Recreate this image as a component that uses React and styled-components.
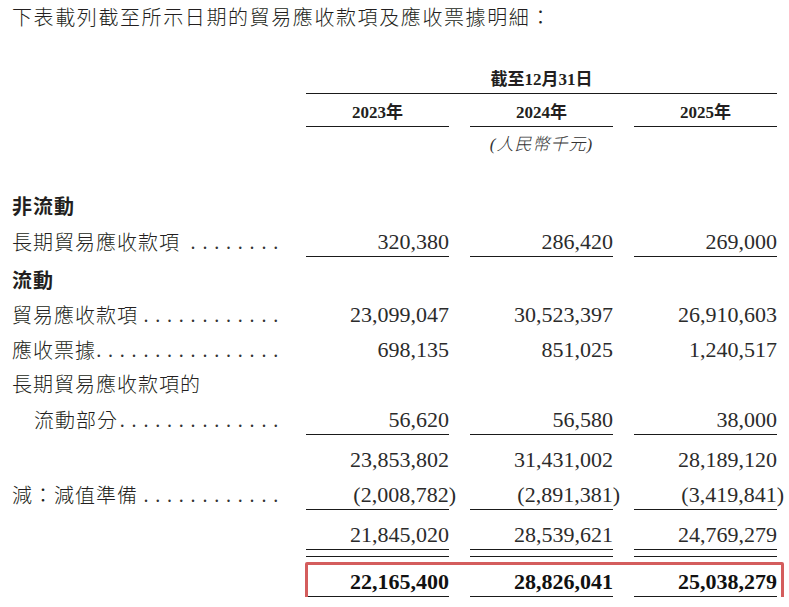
import React from "react";
import styled, { createGlobalStyle, css } from "styled-components";

const CJK = `"Noto Sans CJK TC", "Noto Sans CJK SC", sans-serif`;
const NUM = `"Liberation Serif", "Noto Sans CJK TC", serif`;

const rows = [
  { type: "heading", label: "非流動", mt: 34 },
  { label: "長期貿易應收款項", dots: 8, values: ["320,380", "286,420", "269,000"], rule: "single", mt: 8 },
  { type: "heading", label: "流動", mt: 9 },
  { label: "貿易應收款項", dots: 12, values: ["23,099,047", "30,523,397", "26,910,603"], mt: 7 },
  { label: "應收票據", dots: 16, values: ["698,135", "851,025", "1,240,517"], mt: 7 },
  { label: "長期貿易應收款項的", mt: 6 },
  { label: "流動部分", indent: 22, dots: 14, values: ["56,620", "56,580", "38,000"], rule: "single", mt: 8 },
  { label: "", values: ["23,853,802", "31,431,002", "28,189,120"], mt: 11 },
  { label: "減：減值準備", dots: 12, values: ["(2,008,782)", "(2,891,381)", "(3,419,841)"], rule: "single", mt: 7 },
  { label: "", values: ["21,845,020", "28,539,621", "24,769,279"], rule: "double", mt: 11 },
  { label: "", values: ["22,165,400", "28,826,041", "25,038,279"], rule: "double", bold: true, highlight: true, mt: 18 },
];

const renderAmount = (value) => {
  if (value.endsWith(")")) {
    return (
      <>
        {value.slice(0, -1)}
        <Paren>)</Paren>
      </>
    );
  }
  return value;
};

const App = () => {
  return (
    <>
      <GlobalStyle />
      <Page>
        <Intro>下表載列截至所示日期的貿易應收款項及應收票據明細：</Intro>

        <Row $lh={26} $mt={35}>
          <span />
          <PeriodTitle>截至12月31日</PeriodTitle>
        </Row>
        <Row $lh={26} $mt={6}>
          <span />
          <YearCell>2023年</YearCell>
          <YearCell>2024年</YearCell>
          <YearCell>2025年</YearCell>
        </Row>
        <Row $lh={26} $mt={5}>
          <span />
          <span />
          <Unit>(人民幣千元)</Unit>
        </Row>

        {rows.map((row, i) =>
          row.type === "heading" ? (
            <Row key={i} $mt={row.mt}>
              <SectionLabel>{row.label}</SectionLabel>
            </Row>
          ) : (
            <Row key={i} $mt={row.mt} $highlight={row.highlight}>
              <Label $indent={row.indent}>
                <span>{row.label}</span>
                {row.dots ? <Leader>{".".repeat(row.dots)}</Leader> : null}
              </Label>
              {(row.values || ["", "", ""]).map((v, j) =>
                row.values ? (
                  <Amount key={j} $rule={row.rule} $bold={row.bold}>
                    {renderAmount(v)}
                  </Amount>
                ) : (
                  <span key={j} />
                )
              )}
            </Row>
          )
        )}
      </Page>
    </>
  );
};
export default App;

const GlobalStyle = createGlobalStyle`
  body {
    margin: 0;
    background: #ffffff;
  }
`;

const Page = styled.div`
  width: 789px;
  box-sizing: border-box;
  padding: 2px 12px 0;
  color: #231f20;
`;

const Intro = styled.p`
  margin: 0;
  font-family: ${CJK};
  font-size: 20px;
  font-weight: 300;
  letter-spacing: 1.6px;
  line-height: 30px;
  white-space: nowrap;
`;

const Row = styled.div`
  position: relative;
  display: grid;
  grid-template-columns: 273px 143px 143px 143px;
  column-gap: 21px;
  margin-top: ${(p) => p.$mt || 0}px;
  line-height: ${(p) => p.$lh || 28}px;

  ${(p) =>
    p.$highlight &&
    css`
      &::after {
        content: "";
        position: absolute;
        left: 293px;
        right: -7px;
        top: -6px;
        bottom: -6px;
        border: 3px solid #d45d5d;
        border-radius: 2px;
        pointer-events: none;
      }
    `}
`;

const PeriodTitle = styled.div`
  grid-column: 2 / 5;
  text-align: center;
  font-family: ${NUM};
  font-size: 17px;
  font-weight: 700;
  border-bottom: 1px solid #1a1a1a;
`;

const YearCell = styled.div`
  text-align: center;
  font-family: ${NUM};
  font-size: 17px;
  font-weight: 700;
  border-bottom: 1px solid #1a1a1a;
`;

const Unit = styled.div`
  text-align: center;
  font-family: ${NUM};
  font-size: 17px;
  font-style: italic;
  font-weight: 300;
  letter-spacing: 1px;
  color: #333;
`;

const SectionLabel = styled.div`
  font-family: ${CJK};
  font-size: 20px;
  font-weight: 700;
  letter-spacing: 1px;
`;

const Label = styled.div`
  display: flex;
  padding-left: ${(p) => p.$indent || 0}px;
  white-space: nowrap;
  font-family: ${CJK};
  font-size: 20px;
  font-weight: 300;
  letter-spacing: 1px;
`;

const Leader = styled.span`
  flex: 1;
  overflow: hidden;
  text-align: right;
  font-family: "Liberation Serif", serif;
  font-size: 20px;
  letter-spacing: 6.8px;
  color: #333;
`;

const Amount = styled.div`
  text-align: right;
  font-family: ${NUM};
  font-size: 22px;
  font-weight: ${(p) => (p.$bold ? 700 : 400)};
  color: ${(p) => (p.$bold ? "#111" : "#2b2b2b")};

  ${(p) =>
    p.$rule &&
    css`
      border-bottom: 1px solid #1a1a1a;
    `}
  ${(p) =>
    p.$rule === "double" &&
    css`
      box-shadow: 0 6px 0 0 #ffffff, 0 7px 0 0 #1a1a1a;
    `}
`;

const Paren = styled.span`
  margin-right: -7px;
`;
